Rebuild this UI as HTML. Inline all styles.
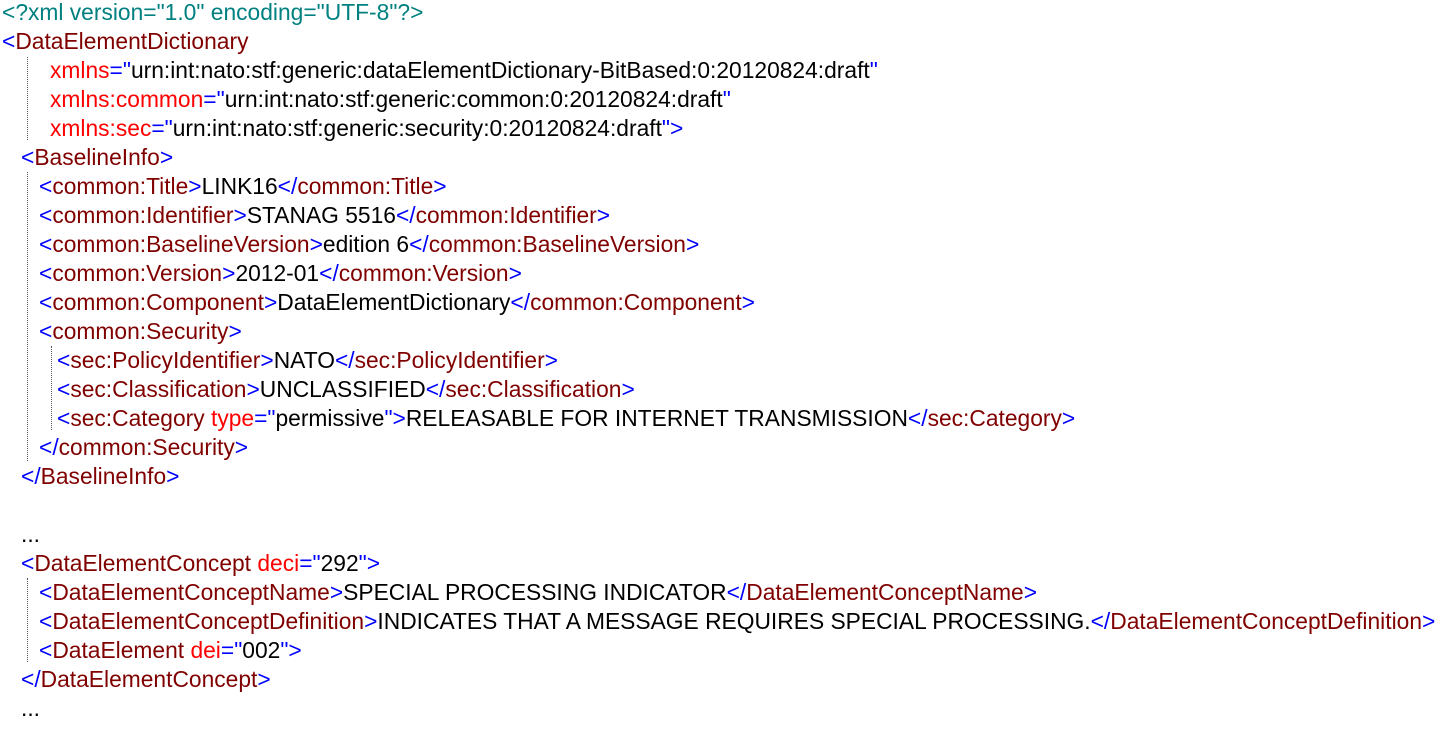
<!DOCTYPE html>
<html><head><meta charset="utf-8"><style>
body{margin:0;background:#fff;width:1441px;height:730px;overflow:hidden;position:relative;font-family:"Liberation Sans",Arial,sans-serif;font-size:22.8px}
.l{position:absolute;white-space:pre;line-height:29px;height:29px}
.b{color:#0000ff}.e{color:#800000}.a{color:#ff0000}.t{color:#000}.d{color:#008080}
.g{position:absolute;width:0;border-left:1px dotted #555}
</style></head><body>
<div class="l d" style="left:2px;top:-2px">&lt;?xml version="1.0" encoding="UTF-8"?&gt;</div>
<div class="l" style="left:2px;top:27px"><span class="b">&lt;</span><span class="e">DataElementDictionary</span></div>
<div class="l" style="left:50px;top:56px"><span class="a">xmlns</span><span class="b">="</span>urn:int:nato:stf:generic:dataElementDictionary-BitBased:0:20120824:draft<span class="b">"</span></div>
<div class="l" style="left:50px;top:85px"><span class="a">xmlns:common</span><span class="b">="</span>urn:int:nato:stf:generic:common:0:20120824:draft<span class="b">"</span></div>
<div class="l" style="left:50px;top:114px"><span class="a">xmlns:sec</span><span class="b">="</span>urn:int:nato:stf:generic:security:0:20120824:draft<span class="b">"&gt;</span></div>
<div class="l" style="left:21px;top:143px"><span class="b">&lt;</span><span class="e">BaselineInfo</span><span class="b">&gt;</span></div>
<div class="l" style="left:39px;top:172px"><span class="b">&lt;</span><span class="e">common:Title</span><span class="b">&gt;</span>LINK16<span class="b">&lt;/</span><span class="e">common:Title</span><span class="b">&gt;</span></div>
<div class="l" style="left:39px;top:201px"><span class="b">&lt;</span><span class="e">common:Identifier</span><span class="b">&gt;</span>STANAG 5516<span class="b">&lt;/</span><span class="e">common:Identifier</span><span class="b">&gt;</span></div>
<div class="l" style="left:39px;top:230px"><span class="b">&lt;</span><span class="e">common:BaselineVersion</span><span class="b">&gt;</span>edition 6<span class="b">&lt;/</span><span class="e">common:BaselineVersion</span><span class="b">&gt;</span></div>
<div class="l" style="left:39px;top:259px"><span class="b">&lt;</span><span class="e">common:Version</span><span class="b">&gt;</span>2012-01<span class="b">&lt;/</span><span class="e">common:Version</span><span class="b">&gt;</span></div>
<div class="l" style="left:39px;top:288px"><span class="b">&lt;</span><span class="e">common:Component</span><span class="b">&gt;</span>DataElementDictionary<span class="b">&lt;/</span><span class="e">common:Component</span><span class="b">&gt;</span></div>
<div class="l" style="left:39px;top:317px"><span class="b">&lt;</span><span class="e">common:Security</span><span class="b">&gt;</span></div>
<div class="l" style="left:57px;top:346px"><span class="b">&lt;</span><span class="e">sec:PolicyIdentifier</span><span class="b">&gt;</span>NATO<span class="b">&lt;/</span><span class="e">sec:PolicyIdentifier</span><span class="b">&gt;</span></div>
<div class="l" style="left:57px;top:375px"><span class="b">&lt;</span><span class="e">sec:Classification</span><span class="b">&gt;</span>UNCLASSIFIED<span class="b">&lt;/</span><span class="e">sec:Classification</span><span class="b">&gt;</span></div>
<div class="l" style="left:57px;top:404px"><span class="b">&lt;</span><span class="e">sec:Category </span><span class="a">type</span><span class="b">="</span>permissive<span class="b">"&gt;</span>RELEASABLE FOR INTERNET TRANSMISSION<span class="b">&lt;/</span><span class="e">sec:Category</span><span class="b">&gt;</span></div>
<div class="l" style="left:39px;top:433px"><span class="b">&lt;/</span><span class="e">common:Security</span><span class="b">&gt;</span></div>
<div class="l" style="left:21px;top:462px"><span class="b">&lt;/</span><span class="e">BaselineInfo</span><span class="b">&gt;</span></div>
<div class="l" style="left:21px;top:520px">...</div>
<div class="l" style="left:21px;top:549px"><span class="b">&lt;</span><span class="e">DataElementConcept </span><span class="a">deci</span><span class="b">="</span>292<span class="b">"&gt;</span></div>
<div class="l" style="left:39px;top:578px"><span class="b">&lt;</span><span class="e">DataElementConceptName</span><span class="b">&gt;</span>SPECIAL PROCESSING INDICATOR<span class="b">&lt;/</span><span class="e">DataElementConceptName</span><span class="b">&gt;</span></div>
<div class="l" style="left:39px;top:607px"><span class="b">&lt;</span><span class="e">DataElementConceptDefinition</span><span class="b">&gt;</span>INDICATES THAT A MESSAGE REQUIRES SPECIAL PROCESSING.<span class="b">&lt;/</span><span class="e">DataElementConceptDefinition</span><span class="b">&gt;</span></div>
<div class="l" style="left:39px;top:636px"><span class="b">&lt;</span><span class="e">DataElement </span><span class="a">dei</span><span class="b">="</span>002<span class="b">"&gt;</span></div>
<div class="l" style="left:21px;top:665px"><span class="b">&lt;/</span><span class="e">DataElementConcept</span><span class="b">&gt;</span></div>
<div class="l" style="left:21px;top:694px">...</div>
<div class="g" style="left:27px;top:57px;height:83px"></div>
<div class="g" style="left:27px;top:172px;height:289px"></div>
<div class="g" style="left:51px;top:346px;height:84px"></div>
<div class="g" style="left:27px;top:578px;height:84px"></div>
</body></html>
